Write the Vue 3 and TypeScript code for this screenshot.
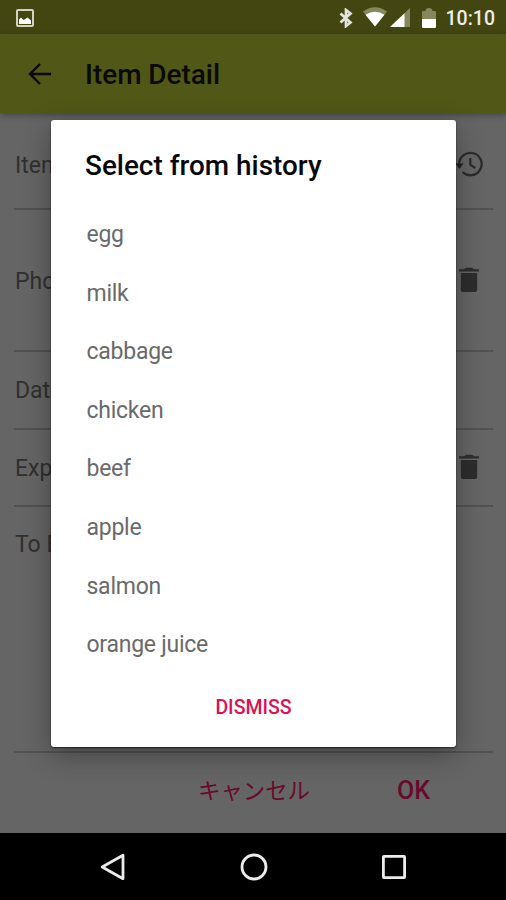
<script setup lang="ts">
interface Field {
  label: string
  kind: string
  icon?: 'history' | 'trash'
}

const fields: Field[] = [
  { label: 'Item', kind: 'name', icon: 'history' },
  { label: 'Photo', kind: 'photo', icon: 'trash' },
  { label: 'Date', kind: 'date' },
  { label: 'Exp.', kind: 'expiry', icon: 'trash' },
  { label: 'To Buy', kind: 'memo' },
]

const history: string[] = ['egg', 'milk', 'cabbage', 'chicken', 'beef', 'apple', 'salmon', 'orange juice']
</script>

<template>
  <div class="screen">
    <header class="status">
      <svg class="picture" viewBox="0 0 18 18">
        <rect x="1" y="1" width="16" height="16" rx="1" fill="none" stroke="#d2d2bf" stroke-width="2" />
        <path d="M3 15v-4.500l2-2 2.500 2.500 2-1 2-1.500 3.500 3V15z" fill="#fff" />
      </svg>
      <div class="indicators">
        <svg class="bluetooth" viewBox="0 0 14 20">
          <path d="M1.500 5.500l10 9L7 18v-16l4.500 3.500-10 9" fill="none" stroke="#e2e2dc" stroke-width="2.7" />
        </svg>
        <svg class="wifi" viewBox="0 0 24 20">
          <path d="M0 4.500Q12-4 24 4.500L12 19.500z" fill="#85885d" />
          <path d="M2.500 7.800Q12 1.800 21.500 7.800L12 19.500z" fill="#fff" />
        </svg>
        <svg class="signal" viewBox="0 0 20 19">
          <path d="M0 19L20 0v19z" fill="#85885d" />
          <path d="M0 19L14.500 5.200V19z" fill="#fff" />
        </svg>
        <svg class="battery" viewBox="0 0 14 20">
          <path d="M1 3h2.500q0-3 3.500-3t3.500 3H13q1 0 1 1v7H0V4q0-1 1-1z" fill="#85885d" />
          <path d="M0 11h14v8q0 1-1 1H1q-1 0-1-1z" fill="#fff" />
        </svg>
        <span class="clock">10:10</span>
      </div>
    </header>

    <div class="toolbar">
      <svg class="back" viewBox="0 0 24 22">
        <path d="M23 11H2M12 1L2 11l10 10" fill="none" stroke="#080900" stroke-width="2.4" />
      </svg>
      <h1>Item Detail</h1>
    </div>

    <main class="form">
      <div v-for="field in fields" :key="field.kind" class="field" :class="field.kind">
        <span>{{ field.label }}</span>
        <svg v-if="field.icon === 'history'" class="history-icon" viewBox="0 0 28 26">
          <path d="M3.200 13a11.200 11.200 0 1 1 3.300 8" fill="none" stroke="#2b2b2b" stroke-width="2.3" />
          <path d="M-.5 12.500h8L3.500 18z" fill="#222" />
          <path d="M14.300 7v6.600l5 3.500" fill="none" stroke="#2b2b2b" stroke-width="2.2" />
        </svg>
        <svg v-if="field.icon === 'trash'" class="trash-icon" viewBox="0 0 20 26">
          <path d="M0 2.200h5L7 .7h6l2 1.500h5v2.300H0zM1.800 6h16.400v17q0 2-2 2H3.800q-2 0-2-2z" fill="#2d2d2d" />
        </svg>
      </div>
    </main>

    <div class="actions">
      <span class="cancel">キャンセル</span>
      <span class="ok">OK</span>
    </div>

    <nav class="navigation">
      <svg viewBox="0 0 28 28"><path d="M3.200 14L24 2.300v23.400z" /></svg>
      <svg viewBox="0 0 28 28"><circle cx="14" cy="14" r="12" /></svg>
      <svg viewBox="0 0 28 28"><rect x="3.4" y="3.4" width="21.2" height="21.2" rx=".5" /></svg>
    </nav>

    <section class="dialog">
      <h2>Select from history</h2>
      <ul>
        <li v-for="entry in history" :key="entry">{{ entry }}</li>
      </ul>
      <button type="button">DISMISS</button>
    </section>
  </div>
</template>

<style>
body {
  margin: 0;
}
</style>

<style scoped>
* {
  box-sizing: border-box;
}
.screen {
  position: relative;
  display: flex;
  flex-direction: column;
  width: 506px;
  height: 900px;
  overflow: hidden;
  background: #656565;
  font-family: Roboto, "Noto Sans CJK JP", sans-serif;
}
svg {
  display: block;
  flex: none;
}
.status {
  flex: none;
  display: flex;
  justify-content: space-between;
  height: 34px;
  padding: 0 11px 0 16px;
  background: #434611;
}
.picture {
  width: 18px;
  height: 18px;
  margin-top: 9px;
}
.indicators {
  display: flex;
}
.bluetooth {
  width: 14px;
  height: 20px;
  margin: 8px 10px 0 0;
}
.wifi {
  width: 24px;
  height: 20px;
  margin: 7px 3px 0 0;
}
.signal {
  width: 20px;
  height: 19px;
  margin: 8px 12px 0 0;
}
.battery {
  width: 14px;
  height: 20px;
  margin: 8px 10px 0 0;
}
.clock {
  color: #eeeee8;
  font-size: 19.5px;
  font-weight: 500;
  line-height: 37px;
}
.toolbar {
  flex: none;
  display: flex;
  align-items: center;
  gap: 33px;
  height: 79px;
  padding-left: 28px;
  background: #505717;
  box-shadow: 0 2px 7px rgba(0, 0, 0, 0.35);
}
.back {
  width: 24px;
  height: 22px;
}
h1 {
  margin: 3px 0 0;
  color: #090a01;
  font-size: 27.9px;
  font-weight: 500;
  line-height: 32px;
}
.form {
  flex: none;
  display: flex;
  flex-direction: column;
  padding: 0 13px 0 14px;
}
.field {
  display: flex;
  align-items: center;
  justify-content: space-between;
  padding: 2px 14px 0 1px;
  border-bottom: 2px solid #515151;
  color: #303030;
  font-size: 23px;
}
.name {
  height: 97px;
  padding: 9px 9px 0 1px;
}
.photo {
  height: 142px;
}
.date,
.expiry {
  height: 77.5px;
}
.memo {
  height: 246px;
  align-items: flex-start;
  padding-top: 24px;
}
.history-icon {
  width: 28px;
  height: 26px;
  margin-bottom: 2px;
}
.trash-icon {
  width: 20px;
  height: 26px;
  margin-bottom: 2px;
}
.actions {
  flex: 1;
  display: flex;
  align-items: center;
  justify-content: flex-end;
  gap: 87px;
  padding: 0 76px 5px 0;
  color: #680a2c;
}
.cancel {
  margin-bottom: 4px;
  font-size: 22.4px;
}
.ok {
  font-size: 25px;
  font-weight: 500;
}
.navigation {
  flex: none;
  display: flex;
  align-items: center;
  justify-content: center;
  gap: 112.5px;
  height: 67px;
  padding-left: 1px;
  background: #000;
}
.navigation svg {
  width: 28px;
  height: 28px;
  fill: none;
  stroke: #ececec;
  stroke-width: 2.8;
  stroke-linejoin: round;
}
.dialog {
  position: absolute;
  top: 120px;
  left: 51px;
  display: flex;
  flex-direction: column;
  width: 405px;
  height: 627px;
  padding: 29px 35px 0;
  border-radius: 3px;
  background: #fff;
  box-shadow: 0 1px 2px rgba(0, 0, 0, 0.6), 0 8px 28px rgba(0, 0, 0, 0.33);
}
h2 {
  margin: 0 0 40px -1px;
  color: #080808;
  font-size: 27.9px;
  font-weight: 500;
  line-height: 34px;
}
ul {
  display: flex;
  flex-direction: column;
  gap: 34.6px;
  margin: 0;
  padding: 0 0 0 0.5px;
  color: #6a6a6a;
  font-size: 23px;
  letter-spacing: -0.25px;
  line-height: 24px;
  list-style: none;
}
button {
  align-self: center;
  margin-top: 38.5px;
  padding: 0;
  border: 0;
  background: none;
  color: #da1254;
  font: 500 19.5px/24px Roboto, sans-serif;
}
</style>
